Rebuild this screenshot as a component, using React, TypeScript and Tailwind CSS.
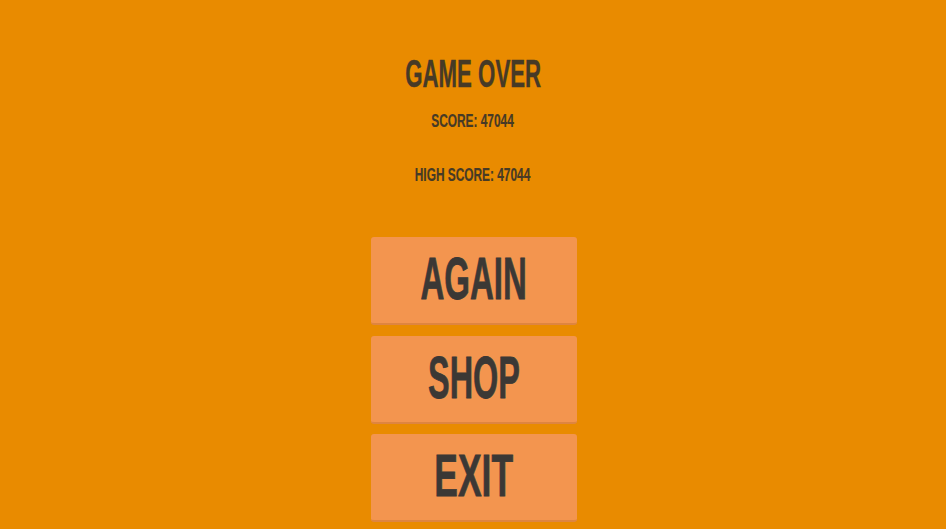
import React from "react";

export default function App() {
  return (
    <div className="h-[529px] w-full overflow-hidden bg-[#e98b00] flex flex-col items-center font-['Liberation_Sans',Arial,sans-serif] font-bold text-[#3b3835]">
      <div className="mt-[54px] h-[39px] text-[39px] leading-none whitespace-nowrap scale-x-[0.57] text-[#463a26] [-webkit-text-stroke:0.4px_#463a26]">
        GAME OVER
      </div>
      <div className="mt-[19px] h-[18px] text-[18px] leading-none whitespace-nowrap scale-x-[0.66] text-[#463a26] [-webkit-text-stroke:0.2px_#463a26]">
        SCORE: 47044
      </div>
      <div className="mt-[36px] h-[18px] text-[18px] leading-none whitespace-nowrap scale-x-[0.66] text-[#463a26] [-webkit-text-stroke:0.2px_#463a26]">
        HIGH SCORE: 47044
      </div>
      <button className="mt-[53px] ml-[2px] w-[206px] h-[88px] rounded-[3px] bg-[#f3954f] border-b-2 border-[#de8540] flex items-center justify-center pb-[3px]">
        <span className="text-[60px] leading-none whitespace-nowrap scale-x-[0.55] [-webkit-text-stroke:0.8px_#3b3835]">AGAIN</span>
      </button>
      <button className="mt-[11px] ml-[2px] w-[206px] h-[88px] rounded-[3px] bg-[#f3954f] border-b-2 border-[#de8540] flex items-center justify-center pb-[3px]">
        <span className="text-[60px] leading-none whitespace-nowrap scale-x-[0.54] [-webkit-text-stroke:0.8px_#3b3835]">SHOP</span>
      </button>
      <button className="mt-[10px] ml-[2px] w-[206px] h-[88px] rounded-[3px] bg-[#f3954f] border-b-2 border-[#de8540] flex items-center justify-center pb-[3px]">
        <span className="text-[60px] leading-none whitespace-nowrap scale-x-[0.59] [-webkit-text-stroke:0.8px_#3b3835]">EXIT</span>
      </button>
    </div>
  );
}
